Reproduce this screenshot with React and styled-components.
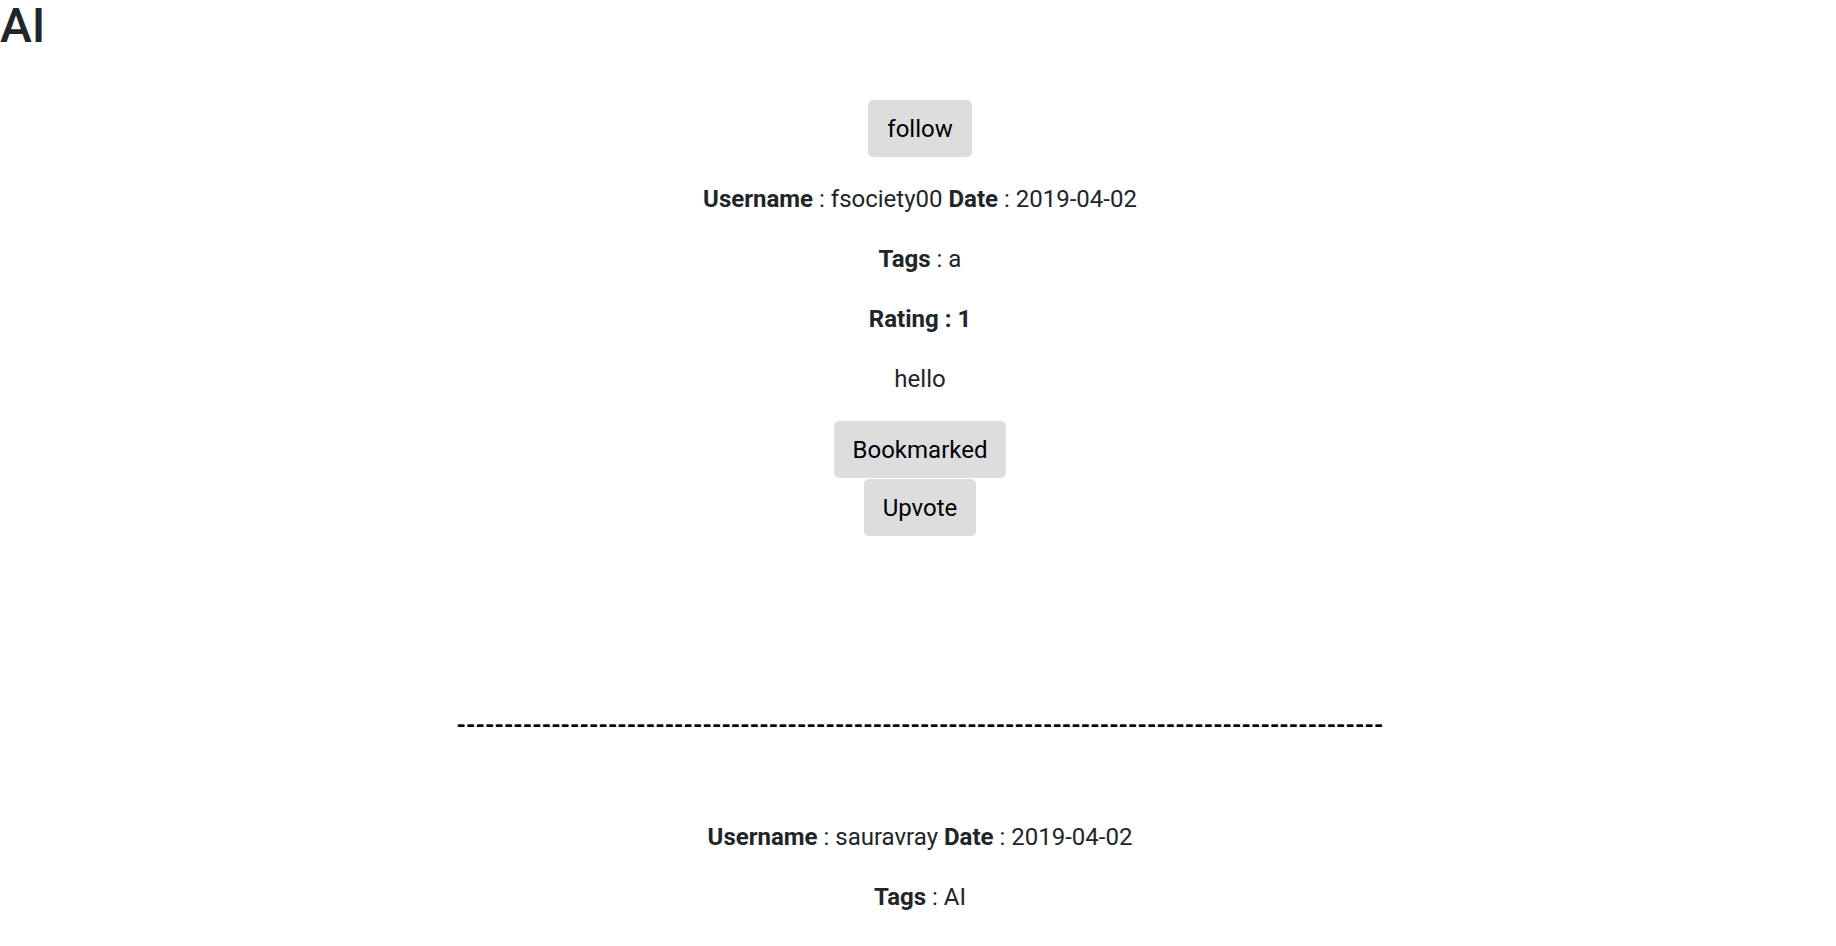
import React from "react";
import styled, { createGlobalStyle } from "styled-components";

const GlobalStyle = createGlobalStyle`
  body {
    margin: 0;
    font-family: Roboto, "Liberation Sans", sans-serif;
    color: #212529;
    background: #fff;
  }
`;

const posts = [
  {
    id: 1,
    username: "fsociety00",
    date: "2019-04-02",
    tags: "a",
    rating: 1,
    body: "hello",
    canFollow: true,
  },
  {
    id: 2,
    username: "sauravray",
    date: "2019-04-02",
    tags: "AI",
    rating: 3,
    body: "",
    canFollow: false,
  },
];

function Post({ post }) {
  return (
    <Card>
      {post.canFollow && <Button>follow</Button>}
      <Lines>
        <Line>
          <b>Username</b> : {post.username} <b>Date</b> : {post.date}
        </Line>
        <Line>
          <b>Tags</b> : {post.tags}
        </Line>
        <Line>
          <b>Rating : {post.rating}</b>
        </Line>
        <Line>{post.body}</Line>
      </Lines>
      <Actions>
        <Button>Bookmarked</Button>
        <Button>Upvote</Button>
      </Actions>
    </Card>
  );
}

export default function App() {
  return (
    <>
      <GlobalStyle />
      <Title>AI</Title>
      <Feed>
        {posts.map((post, i) => (
          <React.Fragment key={post.id}>
            {i > 0 && <Divider>{"-".repeat(98)}</Divider>}
            <Post post={post} />
          </React.Fragment>
        ))}
      </Feed>
    </>
  );
}

const Title = styled.h1`
  margin: 0;
  font-size: 48px;
  line-height: 1.1;
  font-weight: 500;
  color: #212529;
`;

const Feed = styled.div`
  display: flex;
  flex-direction: column;
  align-items: center;
  padding: 47px 0 0 4px;
  text-align: center;
`;

const Card = styled.div`
  display: flex;
  flex-direction: column;
  align-items: center;
`;

const Lines = styled.div`
  margin: 12px 0;
`;

const Line = styled.p`
  margin: 0;
  font-size: 24px;
  line-height: 60px;

  b {
    font-weight: 700;
  }
`;

const Actions = styled.div`
  display: flex;
  flex-direction: column;
  align-items: center;
  gap: 1px;
`;

const Button = styled.button`
  font-family: Roboto, "Liberation Sans", sans-serif;
  font-size: 24px;
  line-height: 27px;
  padding: 16px 19px 14px;
  color: #000;
  background: #ddd;
  border: none;
  border-radius: 5px;
  cursor: pointer;
`;

const Divider = styled.div`
  margin: 169px 0 50px;
  font-size: 24px;
  font-weight: 700;
  line-height: 40px;
  color: #000;
  white-space: nowrap;
`;
